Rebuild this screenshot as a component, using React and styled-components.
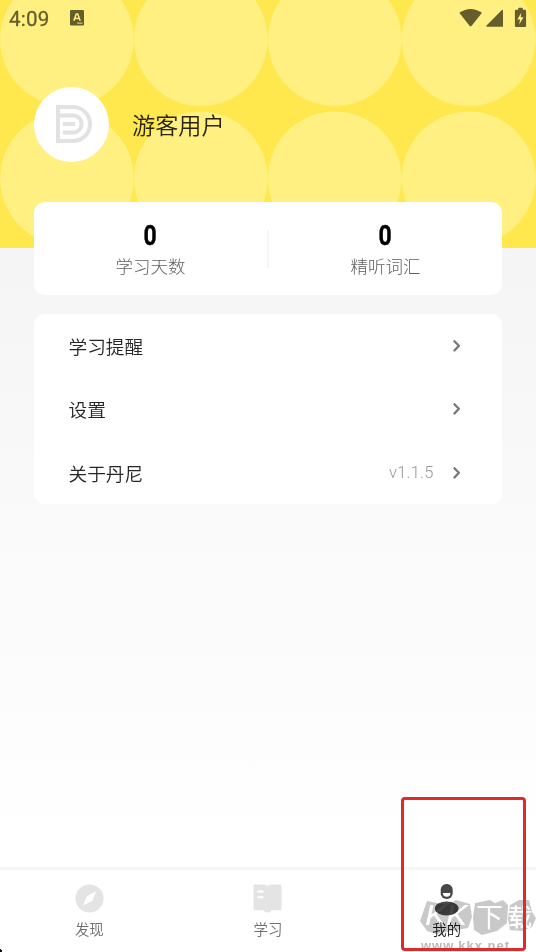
import React from "react";
import styled, { createGlobalStyle } from "styled-components";

const GlobalStyle = createGlobalStyle`
  * { box-sizing: border-box; }
  body { margin: 0; font-family: Roboto, "Noto Sans CJK SC", sans-serif; }
`;

const Screen = styled.div`
  position: relative;
  width: 536px;
  height: 952px;
  overflow: hidden;
  display: flex;
  flex-direction: column;
  background:
    radial-gradient(circle at 50% 50%, #fff081 66.3px, transparent 67.2px) 0 -30px / 133.9px 138.6px repeat-x,
    radial-gradient(circle at 50% 50%, #fff081 66.3px, transparent 67.2px) 0 108.5px / 133.9px 138.6px repeat-x,
    linear-gradient(#ffe84d, #ffe84d) 0 0 / 100% 248px no-repeat,
    linear-gradient(#f5f5f5 248px, #ffffff 850px);
`;

const StatusBar = styled.header`
  height: 36px;
  padding: 0 9px 0 9px;
  display: flex;
  align-items: center;
  justify-content: space-between;
  color: #655d2b;
`;

const StatusLeft = styled.div`
  display: flex;
  align-items: center;
  gap: 20px;
`;

const Clock = styled.span`
  font-size: 20.5px;
  line-height: 36px;
  letter-spacing: 0.25px;
  -webkit-text-stroke: 0.3px #655d2b;
  padding-top: 1px;
`;

const Profile = styled.section`
  display: flex;
  align-items: center;
  gap: 23px;
  height: 76px;
  margin: 50px 34px 40px;
`;

const Avatar = styled.div`
  width: 75px;
  height: 75px;
  border-radius: 50%;
  background: #fff;
  display: flex;
`;

const UserName = styled.h1`
  margin: 0;
  padding-top: 4px;
  font-size: 23.2px;
  line-height: 32px;
  font-weight: 350;
  color: #29240f;
`;

const Card = styled.section`
  margin: 0 34px;
  border-radius: 11px;
  background: #fff;
`;

const StatsCard = styled(Card)`
  height: 93px;
  display: flex;
  align-items: center;
`;

const Stat = styled.div`
  flex: 1;
  display: flex;
  flex-direction: column;
  align-items: center;
  padding-top: 3px;
`;

const StatValue = styled.strong`
  font-size: 28px;
  line-height: 35px;
  font-weight: 700;
  color: #000;
  transform: scaleX(0.82);
  -webkit-text-stroke: 0.4px #000;
`;

const StatLabel = styled.span`
  font-size: 17.5px;
  line-height: 29px;
  font-weight: 300;
  color: #606060;
`;

const Divider = styled.div`
  width: 2px;
  height: 38px;
  background: #f5f5f5;
`;

const MenuCard = styled(Card)`
  height: 190px;
  margin-top: 19px;
`;

const MenuRow = styled.div`
  height: 63.3px;
  padding: 1px 39.5px 0 34.5px;
  display: flex;
  align-items: center;
  font-size: 18.7px;
  font-weight: 350;
  color: #262626;
`;

const MenuTitle = styled.span`
  flex: 1;
  margin-top: -1px;
`;

const Version = styled.span`
  font-size: 16.5px;
  font-weight: 300;
  color: #999;
  margin: -1px 17px 0 0;
  letter-spacing: 0.2px;
`;

const TabBar = styled.nav`
  height: 85px;
  margin-top: auto;
  border-top: 3px solid #f6f6f6;
  background: #fff;
  display: grid;
  grid-template-columns: repeat(3, 1fr);
`;

const Tab = styled.div`
  display: grid;
  grid-template-rows: 34px 22px;
  justify-items: center;
  align-content: start;
  padding-top: ${(p) => (p.$active ? "13px" : "14px")};
  row-gap: ${(p) => (p.$active ? "3px" : "2px")};
  color: ${(p) => (p.$active ? "#161616" : "#6e6e6e")};
  font-size: 14.4px;
  font-weight: 350;
  line-height: 22px;
`;

const Watermark = styled.svg`
  position: absolute;
  left: 414px;
  top: 892px;
  mix-blend-mode: multiply;
`;

const Highlight = styled.div`
  position: absolute;
  left: 401px;
  top: 797px;
  width: 125px;
  height: 154px;
  border: 3px solid #dc2b28;
  border-radius: 4px;
`;

const CornerMark = styled.svg`
  position: absolute;
  left: 0;
  bottom: 0;
`;

const Chevron = () => (
  <svg width="12" height="14" viewBox="0 0 12 14" fill="none">
    <path d="M3.4 2.2 L7.9 6.7 L3.4 11.5" stroke="#777" strokeWidth="2.3" strokeLinecap="round" strokeLinejoin="round" />
  </svg>
);

const KeyboardIcon = () => (
  <svg width="14" height="16" viewBox="0 0 14 16">
    <rect width="14" height="15.5" rx="1.2" fill="#655d2b" />
    <path d="M3.8 10.8 L6.3 4 H7.7 L10.2 10.8 M4.9 8.5 H9.1" stroke="#fff081" strokeWidth="1.5" fill="none" />
    <path d="M7 13.1H12.5" stroke="#fff081" strokeWidth=".9" />
  </svg>
);

const StatusIcons = () => (
  <svg width="68" height="22" viewBox="0 -0.5 68 22" fill="#655d2b">
    <path d="M0.3 5.2 Q11.6 -2.4 23 5.2 L12.5 18.4 Q11.6 19.3 10.7 18.4Z" />
    <path d="M44 2.8 V19.3 H27.8 Q26.7 19 27.5 18 L42.7 2.7 Q43.8 1.8 44 2.8Z" />
    <path d="M59.2 1.2 Q59.2 .2 60 .2H63Q63.8 .2 63.8 1.2V2.3H66Q67.1 2.3 67.1 3.4V18.2Q67.1 19.4 66 19.4H57Q55.9 19.4 55.9 18.2V3.4Q55.9 2.3 57 2.3H59.2Z" />
    <path d="M62.2 5.2 L58.3 12 H61 L60.2 17 L64.5 9.8 H61.8Z" fill="#fff081" />
  </svg>
);

const BrandMark = () => (
  <svg width="75" height="75" viewBox="0 0 75 75" fill="none" stroke="#e2e2e2" strokeWidth="4">
    <path d="M24 20 H39 A17 17 0 0 1 39 54 H24 Z" />
    <path d="M24 28.4 H39 A8.6 8.6 0 0 1 39 45.6 H29" />
    <path d="M29 37H41" />
  </svg>
);

const CompassIcon = () => (
  <svg width="29" height="29" viewBox="0 0 29 29">
    <circle cx="14.5" cy="14.5" r="14" fill="#e4e4e4" />
    <path d="M21.3 7.3 L17.3 17 L8 21.4 L11.8 12.3Z" fill="#fff" />
  </svg>
);

const BookIcon = () => (
  <svg width="29" height="29" viewBox="0 0 29 29">
    <path d="M2 .5H11.2Q13.6 .5 14.5 2.6Q15.4 .5 17.8 .5H27Q28.5 .5 28.5 2V24.8Q28.5 26.2 27 26.2H18.5Q17.5 28.5 14.5 28.5Q11.5 28.5 10.5 26.2H2Q.5 26.2 .5 24.8V2Q.5 .5 2 .5Z" fill="#e4e4e4" />
    <path d="M4.5 7.5H10.5M4.5 13.2H10.5" stroke="#fff" strokeWidth="1.9" />
  </svg>
);

const PersonIcon = () => (
  <svg width="29" height="34" viewBox="0 -1 29 34">
    <rect x="8.7" y="0" width="12" height="15" rx="5.7" fill="#474747" />
    <path d="M10.9 9 H18.5 A3.8 3.8 0 0 1 10.9 9Z" fill="#fff" />
    <ellipse cx="14.7" cy="24.5" rx="11.8" ry="7" fill="#474747" />
  </svg>
);

const SiteWatermark = () => (
  <Watermark width="122" height="60" viewBox="0 0 122 60">
    <g fill="#c9c9c9">
      <path d="M13 9 L33 13 L42 8 L56 12 L58 25 L54 36 L22 42 L13 39 L6 29Z" />
      <path d="M61 11 L76 8 L81 11 L89 8 L94 13 L93 31 L83 39 L68 43 L60 38 L59 25Z" />
      <path d="M96 13 L105 8 L115 8 L118 20 L122 26 L118 35 L108 39 L96 38 L94 27Z" />
    </g>
    <g fill="#fff" fontFamily="Roboto, 'Noto Sans CJK SC', sans-serif">
      <text x="11" y="33" fontSize="27" fontStyle="italic" textLength="42" lengthAdjust="spacingAndGlyphs">KK</text>
      <text x="62" y="35" fontSize="27">下</text>
      <text x="94" y="34" fontSize="24" fontWeight="500">载</text>
    </g>
    <text x="7" y="58" fill="#b9b9b9" fontFamily="Liberation Sans, sans-serif" fontWeight="700" fontSize="13" textLength="88">www.kkx.net</text>
  </Watermark>
);

const menuItems = [
  { title: "学习提醒" },
  { title: "设置" },
  { title: "关于丹尼", version: "v1.1.5" },
];

export default function App() {
  return (
    <>
      <GlobalStyle />
      <Screen>
        <StatusBar>
          <StatusLeft>
            <Clock>4:09</Clock>
            <KeyboardIcon />
          </StatusLeft>
          <StatusIcons />
        </StatusBar>
        <Profile>
          <Avatar><BrandMark /></Avatar>
          <UserName>游客用户</UserName>
        </Profile>
        <StatsCard>
          <Stat><StatValue>0</StatValue><StatLabel>学习天数</StatLabel></Stat>
          <Divider />
          <Stat><StatValue>0</StatValue><StatLabel>精听词汇</StatLabel></Stat>
        </StatsCard>
        <MenuCard>
          {menuItems.map((item) => (
            <MenuRow key={item.title}>
              <MenuTitle>{item.title}</MenuTitle>
              {item.version && <Version>{item.version}</Version>}
              <Chevron />
            </MenuRow>
          ))}
        </MenuCard>
        <TabBar>
          <Tab><CompassIcon />发现</Tab>
          <Tab><BookIcon />学习</Tab>
          <Tab $active><PersonIcon />我的</Tab>
        </TabBar>
        <SiteWatermark />
        <Highlight />
        <CornerMark width="3" height="4"><path d="M0 1H1V2H2V4H0Z" fill="#111" /></CornerMark>
      </Screen>
    </>
  );
}
